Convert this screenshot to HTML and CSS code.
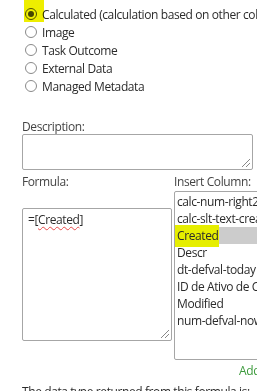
FILE: index.html
```html
<!DOCTYPE html>
<html lang="en">
<head>
    <meta charset="UTF-8">
    <meta name="viewport" content="width=device-width, initial-scale=1.0">
    <title>Column Type</title>
    <link rel="stylesheet" href="styles.css">
</head>
<body>

    <div class="page">
        <ul class="types">
            <li class="type selected"><span class="radio"></span>Calculated (calculation based on other column values)</li>
            <li class="type"><span class="radio"></span>Image</li>
            <li class="type"><span class="radio"></span>Task Outcome</li>
            <li class="type"><span class="radio"></span>External Data</li>
            <li class="type"><span class="radio"></span>Managed Metadata</li>
        </ul>

        <label class="label desc-label" for="desc">Description:</label>
        <div class="textarea desc" id="desc"><span class="grip"></span></div>

        <div class="formula-row">
            <div class="formula-col">
                <label class="label">Formula:</label>
                <div class="textarea formula">=[<span class="typo">Created</span>]<span class="grip"></span></div>
            </div>
            <div class="insert-col">
                <label class="label">Insert Column:</label>
                <ul class="listbox">
                    <li>calc-num-right2dec</li>
                    <li>calc-slt-text-created</li>
                    <li class="current"><span class="mark">Created</span></li>
                    <li>Descr</li>
                    <li>dt-defval-today</li>
                    <li>ID de Ativo de Conformidade</li>
                    <li>Modified</li>
                    <li>num-defval-now</li>
                </ul>
                <a class="add" href="#">Add to formula</a>
            </div>
        </div>

        <p class="return-type">The data type returned from this formula is:</p>
    </div>

</body>
</html>
```

FILE: styles.css
```css
html, body {
    margin: 0;
    overflow: hidden;
    background: white;
}

body {
    font-family: "Open Sans", "Noto Sans", sans-serif;
    font-size: 12px;
    letter-spacing: -0.4px;
    color: #2b2b2b;
}

.page {
    width: 420px;
    padding-left: 22px;
}

/* radio list */
.types {
    list-style: none;
    margin: 0;
    padding: 5px 0 0 3px;
}

.type {
    position: relative;
    display: flex;
    align-items: center;
    height: 18px;
    white-space: nowrap;
}

.radio {
    width: 10px;
    height: 10px;
    border: 1px solid #8a8a8a;
    border-radius: 50%;
    background: white;
    margin-right: 5px;
    box-sizing: content-box;
    position: relative;
}

.selected .radio {
    border-color: #555;
}

.selected .radio::after {
    content: "";
    position: absolute;
    left: 2px;
    top: 2px;
    width: 6px;
    height: 6px;
    border-radius: 50%;
    background: #4a4a4a;
}

/* highlighter mark over the checked radio */
.selected::before {
    content: "";
    position: absolute;
    left: -1px;
    top: -5px;
    width: 20px;
    height: 22px;
    background: #eeee00;
    mix-blend-mode: multiply;
    z-index: 1;
}

.label {
    display: block;
    line-height: 15px;
    color: #444;
}

.desc-label {
    margin-top: 24px;
}

.textarea {
    position: relative;
    border: 1px solid #a6a6a6;
    border-radius: 2px;
    box-sizing: border-box;
    background: white;
}

.desc {
    width: 231px;
    height: 36px;
}

.grip {
    position: absolute;
    right: 2px;
    bottom: 2px;
    width: 8px;
    height: 8px;
    background: linear-gradient(135deg, transparent 45%, #888 45%, #888 55%, transparent 55%, transparent 70%, #888 70%, #888 80%, transparent 80%);
}

.formula-row {
    display: flex;
    gap: 2px;
    margin-top: 4px;
}

.formula-col {
    width: 150px;
}

.formula {
    width: 150px;
    height: 133px;
    margin-top: 19px;
    padding: 3px 5px;
    line-height: 16px;
}

.typo {
    text-decoration: underline wavy #e84a4a;
    text-decoration-thickness: 1px;
    text-underline-offset: 2px;
}

.insert-col {
    width: 160px;
}

.listbox {
    list-style: none;
    margin: 2px 0 0;
    padding: 1px 0;
    height: 169px;
    border: 1px solid #a6a6a6;
    border-radius: 2px;
    box-sizing: border-box;
}

.listbox li {
    height: 17px;
    line-height: 17px;
    padding-left: 2px;
    white-space: nowrap;
}

.listbox .current {
    background: #cccccc;
}

.mark {
    background: #e6ee00;
    padding: 2px 1px 3px 0;
    margin-left: -2px;
    padding-left: 2px;
}

.add {
    display: block;
    margin: 3px 0 0 65px;
    line-height: 15px;
    color: #3c9a3c;
    text-decoration: none;
    white-space: nowrap;
}

.return-type {
    margin: 6px 0 0;
    line-height: 15px;
    white-space: nowrap;
}
```
